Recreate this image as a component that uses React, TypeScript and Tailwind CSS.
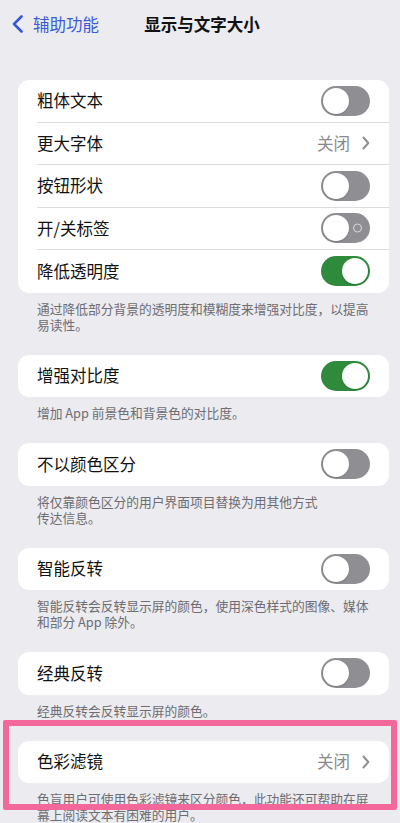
import React from "react";

const FONT = { fontFamily: '"Noto Sans CJK SC", "Noto Sans", sans-serif' };

function Toggle({ on, label }: { on?: boolean; label?: boolean }) {
  return (
    <div
      className={`relative flex h-[30px] w-[49px] items-center rounded-full p-[2px] ${
        on ? "justify-end bg-[#2f8a3c]" : "justify-start bg-[#8e8e93]"
      }`}
    >
      {label && !on && (
        <span className="absolute right-[8px] top-1/2 h-[9px] w-[9px] -translate-y-1/2 rounded-full border-[1.5px] border-[#dadadd]" />
      )}
      <span className="h-[26px] w-[26px] rounded-full bg-white shadow-[0_1px_2px_rgba(0,0,0,0.15)]" />
    </div>
  );
}

function Value() {
  return (
    <div className="flex items-center gap-[12px]">
      <span className="text-[16.5px] text-[#8a8a8e]">关闭</span>
      <svg width="8" height="14" viewBox="0 0 8 14" fill="none">
        <path d="M1.5 1.5L6.3 7L1.5 12.5" stroke="#8e8e93" strokeWidth="2" strokeLinecap="round" strokeLinejoin="round" />
      </svg>
    </div>
  );
}

type Row = { title: string; toggle?: boolean; on?: boolean; label?: boolean };

function Card({ rows }: { rows: Row[] }) {
  return (
    <div className="ml-[18px] w-[371px] overflow-hidden rounded-[11px] bg-white">
      {rows.map((r, i) => (
        <div key={r.title} className="pl-[19px]">
          <div
            className={`flex h-[42.5px] items-center justify-between pr-[19px] ${
              i < rows.length - 1 ? "border-b border-[#dcdce0]" : ""
            }`}
          >
            <span className="text-[16.5px] text-[#111]">{r.title}</span>
            {r.toggle ? <Toggle on={r.on} label={r.label} /> : <Value />}
          </div>
        </div>
      ))}
    </div>
  );
}

function Footer({ lines }: { lines: string[] }) {
  return (
    <div className="pb-[22px] pl-[37px] pt-[8px] text-[12.75px] leading-[16px] text-[#6d6d72]">
      {lines.map((l) => (
        <div key={l} className="whitespace-nowrap">
          {l}
        </div>
      ))}
    </div>
  );
}

export default function App() {
  return (
    <div className="min-h-[823px] w-full bg-[#ebebf0]" style={FONT}>
      <div className="grid h-[48px] grid-cols-[1fr_auto_1fr] items-center">
        <div className="flex items-center gap-[10px] pl-[12px]">
          <svg width="11" height="18" viewBox="0 0 11 18" fill="none">
            <path d="M9.5 1.5L2 9L9.5 16.5" stroke="#3558d8" strokeWidth="2.6" strokeLinecap="round" strokeLinejoin="round" />
          </svg>
          <span className="text-[16.5px] text-[#3a5bd6]">辅助功能</span>
        </div>
        <h1 className="pl-[4px] text-[16.5px] font-semibold text-[#111]">显示与文字大小</h1>
        <div />
      </div>

      <div className="pt-[32px]">
        <Card
          rows={[
            { title: "粗体文本", toggle: true },
            { title: "更大字体" },
            { title: "按钮形状", toggle: true },
            { title: "开/关标签", toggle: true, label: true },
            { title: "降低透明度", toggle: true, on: true },
          ]}
        />
        <Footer lines={["通过降低部分背景的透明度和模糊度来增强对比度，以提高", "易读性。"]} />

        <Card rows={[{ title: "增强对比度", toggle: true, on: true }]} />
        <Footer lines={["增加 App 前景色和背景色的对比度。"]} />

        <Card rows={[{ title: "不以颜色区分", toggle: true }]} />
        <Footer lines={["将仅靠颜色区分的用户界面项目替换为用其他方式", "传达信息。"]} />

        <Card rows={[{ title: "智能反转", toggle: true }]} />
        <Footer lines={["智能反转会反转显示屏的颜色，使用深色样式的图像、媒体", "和部分 App 除外。"]} />

        <Card rows={[{ title: "经典反转", toggle: true }]} />
        <Footer lines={["经典反转会反转显示屏的颜色。"]} />

        <div className="relative">
          <Card rows={[{ title: "色彩滤镜" }]} />
          <Footer lines={["色盲用户可使用色彩滤镜来区分颜色，此功能还可帮助在屏", "幕上阅读文本有困难的用户。"]} />
          <div className="pointer-events-none absolute left-[3px] top-[-21px] h-[90px] w-[394px] rounded-[2px] border-[6px] border-[#f2689a]" />
        </div>
      </div>
    </div>
  );
}
